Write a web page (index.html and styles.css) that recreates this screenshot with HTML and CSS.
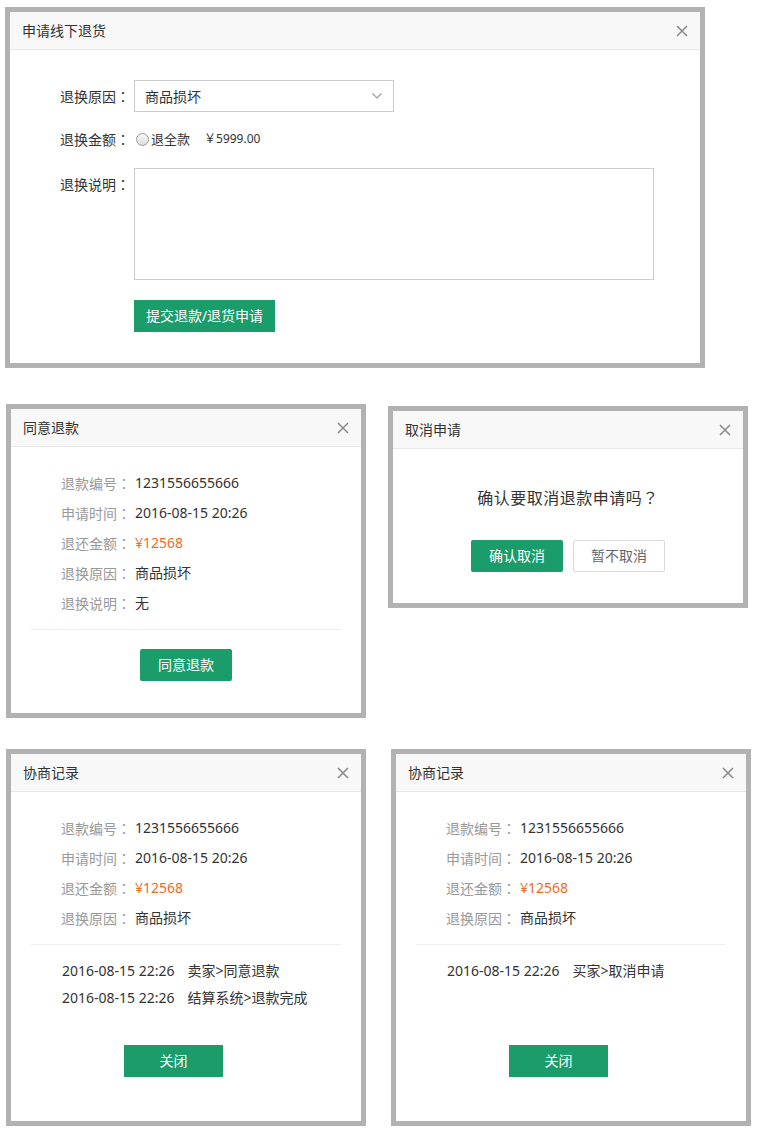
FILE: index.html
```html
<!DOCTYPE html>
<html lang="zh-CN">
<head>
<meta charset="utf-8">
<title>退款对话框</title>
<link rel="stylesheet" href="styles.css">
</head>
<body>
<div class="page">
  <div class="row row-1">
    <section class="dialog dialog-apply">
      <header class="dlg-head">
        <span class="dlg-title">申请线下退货</span>
        <span class="dlg-close"><svg viewBox="0 0 12 12"><path d="M1 1L11 11M11 1L1 11"/></svg></span>
      </header>
      <div class="form-body">
        <div class="form-row">
          <span class="form-label">退换原因<span class="punct" lang="zh-TW">：</span></span>
          <div class="select"><span>商品损坏</span><svg class="chev" viewBox="0 0 10 6"><path d="M0.5 0.5L5 5L9.5 0.5"/></svg></div>
        </div>
        <div class="form-row form-row-amount">
          <span class="form-label">退换金额<span class="punct" lang="zh-TW">：</span></span>
          <span class="radio"></span><span class="radio-text">退全款</span><span class="amount">￥5999.00</span>
        </div>
        <div class="form-row form-row-desc">
          <span class="form-label">退换说明<span class="punct" lang="zh-TW">：</span></span>
          <div class="textarea"></div>
        </div>
        <div class="form-actions"><button class="btn btn-primary btn-submit">提交退款/退货申请</button></div>
      </div>
    </section>
  </div>

  <div class="row row-2">
    <section class="dialog dialog-sm">
      <header class="dlg-head">
        <span class="dlg-title">同意退款</span>
        <span class="dlg-close"><svg viewBox="0 0 12 12"><path d="M1 1L11 11M11 1L1 11"/></svg></span>
      </header>
      <div class="detail-body">
        <div class="info-row"><span class="info-label">退款编号<span class="punct" lang="zh-TW">：</span></span><span class="info-value">1231556655666</span></div>
        <div class="info-row"><span class="info-label">申请时间<span class="punct" lang="zh-TW">：</span></span><span class="info-value">2016-08-15 20:26</span></div>
        <div class="info-row"><span class="info-label">退还金额<span class="punct" lang="zh-TW">：</span></span><span class="info-value price">¥12568</span></div>
        <div class="info-row"><span class="info-label">退换原因<span class="punct" lang="zh-TW">：</span></span><span class="info-value">商品损坏</span></div>
        <div class="info-row"><span class="info-label">退换说明<span class="punct" lang="zh-TW">：</span></span><span class="info-value">无</span></div>
        <div class="divider"></div>
        <div class="actions-center"><button class="btn btn-primary btn-sm">同意退款</button></div>
      </div>
    </section>

    <section class="dialog dialog-sm dialog-cancel">
      <header class="dlg-head">
        <span class="dlg-title">取消申请</span>
        <span class="dlg-close"><svg viewBox="0 0 12 12"><path d="M1 1L11 11M11 1L1 11"/></svg></span>
      </header>
      <div class="confirm-body">
        <p class="confirm-msg">确认要取消退款申请吗<span class="punct" lang="zh-TW">？</span></p>
        <div class="confirm-actions">
          <button class="btn btn-primary btn-sm">确认取消</button>
          <button class="btn btn-default btn-sm">暂不取消</button>
        </div>
      </div>
    </section>
  </div>

  <div class="row row-3">
    <section class="dialog dialog-sm">
      <header class="dlg-head">
        <span class="dlg-title">协商记录</span>
        <span class="dlg-close"><svg viewBox="0 0 12 12"><path d="M1 1L11 11M11 1L1 11"/></svg></span>
      </header>
      <div class="detail-body">
        <div class="info-row"><span class="info-label">退款编号<span class="punct" lang="zh-TW">：</span></span><span class="info-value">1231556655666</span></div>
        <div class="info-row"><span class="info-label">申请时间<span class="punct" lang="zh-TW">：</span></span><span class="info-value">2016-08-15 20:26</span></div>
        <div class="info-row"><span class="info-label">退还金额<span class="punct" lang="zh-TW">：</span></span><span class="info-value price">¥12568</span></div>
        <div class="info-row"><span class="info-label">退换原因<span class="punct" lang="zh-TW">：</span></span><span class="info-value">商品损坏</span></div>
        <div class="divider"></div>
        <div class="log">
          <div class="log-line"><span class="log-time">2016-08-15 22:26</span><span>卖家&gt;同意退款</span></div>
          <div class="log-line"><span class="log-time">2016-08-15 22:26</span><span>结算系统&gt;退款完成</span></div>
        </div>
        <div class="log-actions"><button class="btn btn-primary btn-close">关闭</button></div>
      </div>
    </section>

    <section class="dialog dialog-sm dialog-log-right">
      <header class="dlg-head">
        <span class="dlg-title">协商记录</span>
        <span class="dlg-close"><svg viewBox="0 0 12 12"><path d="M1 1L11 11M11 1L1 11"/></svg></span>
      </header>
      <div class="detail-body">
        <div class="info-row"><span class="info-label">退款编号<span class="punct" lang="zh-TW">：</span></span><span class="info-value">1231556655666</span></div>
        <div class="info-row"><span class="info-label">申请时间<span class="punct" lang="zh-TW">：</span></span><span class="info-value">2016-08-15 20:26</span></div>
        <div class="info-row"><span class="info-label">退还金额<span class="punct" lang="zh-TW">：</span></span><span class="info-value price">¥12568</span></div>
        <div class="info-row"><span class="info-label">退换原因<span class="punct" lang="zh-TW">：</span></span><span class="info-value">商品损坏</span></div>
        <div class="divider"></div>
        <div class="log">
          <div class="log-line"><span class="log-time">2016-08-15 22:26</span><span>买家&gt;取消申请</span></div>
        </div>
        <div class="log-actions"><button class="btn btn-primary btn-close">关闭</button></div>
      </div>
    </section>
  </div>
</div>
</body>
</html>
```

FILE: styles.css
```css
* { box-sizing: border-box; }
html, body { margin: 0; padding: 0; background: #fff; }
body {
  font-family: "Noto Sans", "Noto Sans CJK SC", sans-serif;
  font-size: 14px;
  color: #333;
}
p { margin: 0; }

/* centred full-width punctuation, as in the reference font */
.punct { font-family: "Noto Sans CJK TC", "Noto Sans CJK SC", sans-serif; }

.page {
  display: flex;
  flex-direction: column;
  align-items: flex-start;
  padding: 7px 0 0 5px;
}
.row { display: flex; align-items: flex-start; }
.row-2 { margin: 36px 0 0 1px; }
.row-3 { margin: 31px 0 0 1px; }

.dialog { border: 5px solid #b2b2b2; background: #fff; }
.dialog-apply { width: 700px; }
.dialog-sm { width: 360px; }
.dialog-cancel { margin: 2px 0 0 22px; }
.dialog-log-right { margin-left: 25px; }

.dlg-head {
  height: 38px;
  background: #f8f8f8;
  border-bottom: 1px solid #e8e8e8;
  display: flex;
  align-items: center;
  justify-content: space-between;
  padding: 0 12px;
}
.dlg-title { font-size: 14px; line-height: 20px; color: #333; }
.dlg-close svg { display: block; width: 12px; height: 12px; }
.dlg-close path { stroke: #8a8a8a; stroke-width: 1.5; fill: none; }

/* form dialog */
.form-body { padding: 30px 0 31px; }
.form-row { display: flex; align-items: center; }
.form-label {
  width: 120px;
  flex-shrink: 0;
  margin-right: 4px;
  text-align: right;
  line-height: 20px;
  color: #333;
}
.select {
  width: 260px;
  height: 32px;
  border: 1px solid #ccc;
  display: flex;
  align-items: center;
  justify-content: space-between;
  padding: 0 11px 0 10px;
  color: #333;
}
.chev { width: 10px; height: 6px; display: block; }
.chev path { stroke: #999; stroke-width: 1.1; fill: none; }
.form-row-amount { margin-top: 17px; height: 20px; }
.radio {
  width: 13px;
  height: 13px;
  margin-left: 2px;
  border-radius: 50%;
  border: 1px solid #9c9c9c;
  background: linear-gradient(#f7f7f7, #dcdcdc);
}
.radio-text { margin-left: 2px; font-size: 13px; line-height: 20px; }
.amount { margin-left: 14px; font-size: 12px; line-height: 20px; color: #333; }
.form-row-desc { margin-top: 19px; align-items: flex-start; }
.form-row-desc .form-label { padding-top: 6px; }
.textarea { width: 520px; height: 112px; border: 1px solid #ccc; }
.form-actions { margin-top: 20px; padding-left: 124px; }

.btn {
  font-family: inherit;
  font-size: 14px;
  height: 32px;
  border: 0;
  padding: 0;
  line-height: 32px;
  cursor: pointer;
}
.btn-primary { background: #1a9c6b; color: #fff; }
.btn-default { background: #fff; color: #666; border: 1px solid #d9d9d9; line-height: 30px; }
.btn-submit { width: 141px; }
.btn-sm { width: 92px; border-radius: 2px; }
.btn-close { width: 99px; }

/* detail dialogs */
.detail-body { padding-top: 21px; }
.info-row { display: flex; height: 30px; line-height: 30px; }
.info-label {
  width: 120px;
  flex-shrink: 0;
  margin-right: 4px;
  text-align: right;
  color: #999;
}
.info-value { color: #333; }
.info-value.price { color: #f26a1d; }
.divider { height: 1px; background: #eee; margin: 11px 20px 0; }
.actions-center {
  display: flex;
  justify-content: center;
  margin-top: 19px;
  padding-bottom: 32px;
}

/* confirm dialog */
.confirm-msg {
  padding-top: 36px;
  font-size: 16px;
  letter-spacing: 0.5px;
  line-height: 24px;
  text-align: center;
  color: #333;
}
.confirm-actions {
  display: flex;
  justify-content: center;
  gap: 10px;
  margin-top: 30px;
  padding-bottom: 31px;
}

/* log */
.log { height: 100px; padding: 12px 0 0 51px; }
.log-line { display: flex; line-height: 27px; color: #333; }
.log-time { margin-right: 13px; }
.log-actions { padding: 0 0 44px 113px; }
```
